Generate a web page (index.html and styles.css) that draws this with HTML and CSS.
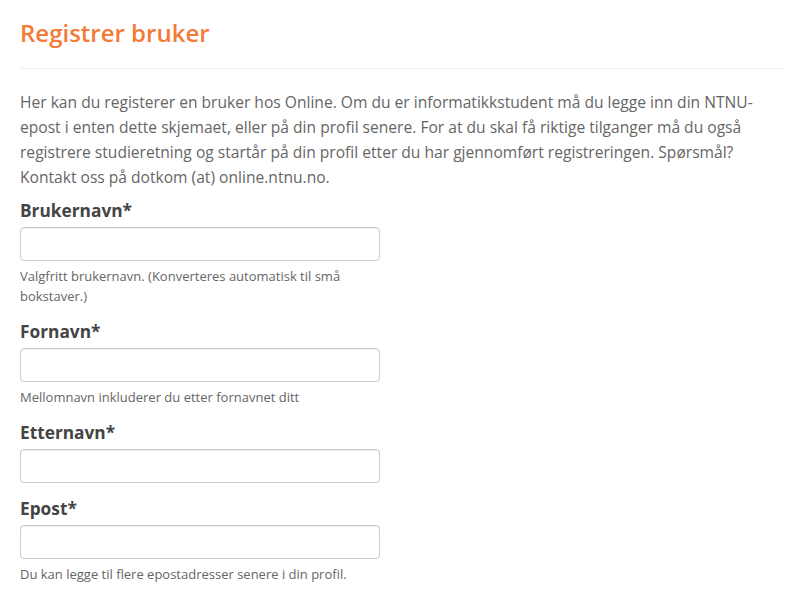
FILE: index.html
```html
<!DOCTYPE html>
<html lang="no">
<head>
<meta charset="utf-8">
<title>Registrer bruker</title>
<link rel="stylesheet" href="styles.css">
</head>
<body>
<main class="page">
  <h1 class="page-header">Registrer bruker</h1>
  <p class="intro">Her kan du registerer en bruker hos Online. Om du er informatikkstudent må du legge inn din NTNU-epost i enten dette skjemaet, eller på din profil senere. For at du skal få riktige tilganger må du også registrere studieretning og startår på din profil etter du har gjennomført registreringen. Spørsmål? Kontakt oss på dotkom (at) online.ntnu.no.</p>
  <form class="form">
    <div class="form-group">
      <label class="label" for="username">Brukernavn*</label>
      <input class="input" id="username" type="text">
      <p class="help">Valgfritt brukernavn. (Konverteres automatisk til små bokstaver.)</p>
    </div>
    <div class="form-group">
      <label class="label" for="first">Fornavn*</label>
      <input class="input" id="first" type="text">
      <p class="help">Mellomnavn inkluderer du etter fornavnet ditt</p>
    </div>
    <div class="form-group">
      <label class="label" for="last">Etternavn*</label>
      <input class="input" id="last" type="text">
    </div>
    <div class="form-group">
      <label class="label" for="email">Epost*</label>
      <input class="input" id="email" type="email">
      <p class="help">Du kan legge til flere epostadresser senere i din profil.</p>
    </div>
  </form>
</main>
</body>
</html>
```
FILE: styles.css
```css
html, body {
  margin: 0;
  padding: 0;
  background: #fff;
}

body {
  font-family: "Open Sans", "Liberation Sans", sans-serif;
  color: #555;
}

.page {
  padding-left: 20px;
}

.page-header {
  margin: 21px 0 0;
  padding-bottom: 23px;
  font-size: 24px;
  line-height: 24px;
  font-weight: 600;
  color: #f47a38;
  border-bottom: 1px solid #eee;
}

.intro {
  margin: 21px 0 10px;
  max-width: 750px;
  font-size: 15.6px;
  line-height: 25px;
  color: #666;
}

.form {
  width: 360px;
}

.form-group {
  margin-bottom: 15px;
}

.label {
  display: block;
  margin-bottom: 5px;
  font-size: 17.3px;
  line-height: 22px;
  font-weight: 700;
  color: #444;
}

.input {
  display: block;
  box-sizing: border-box;
  width: 360px;
  height: 34px;
  margin: 0;
  padding: 6px 12px;
  font-family: inherit;
  font-size: 14px;
  border: 1px solid #ccc;
  border-radius: 4px;
  box-shadow: inset 0 1px 1px rgba(0, 0, 0, 0.075);
  background: #fff;
}

.help {
  margin: 5px 0 10px;
  font-size: 13px;
  line-height: 20px;
  color: #666;
}
```
